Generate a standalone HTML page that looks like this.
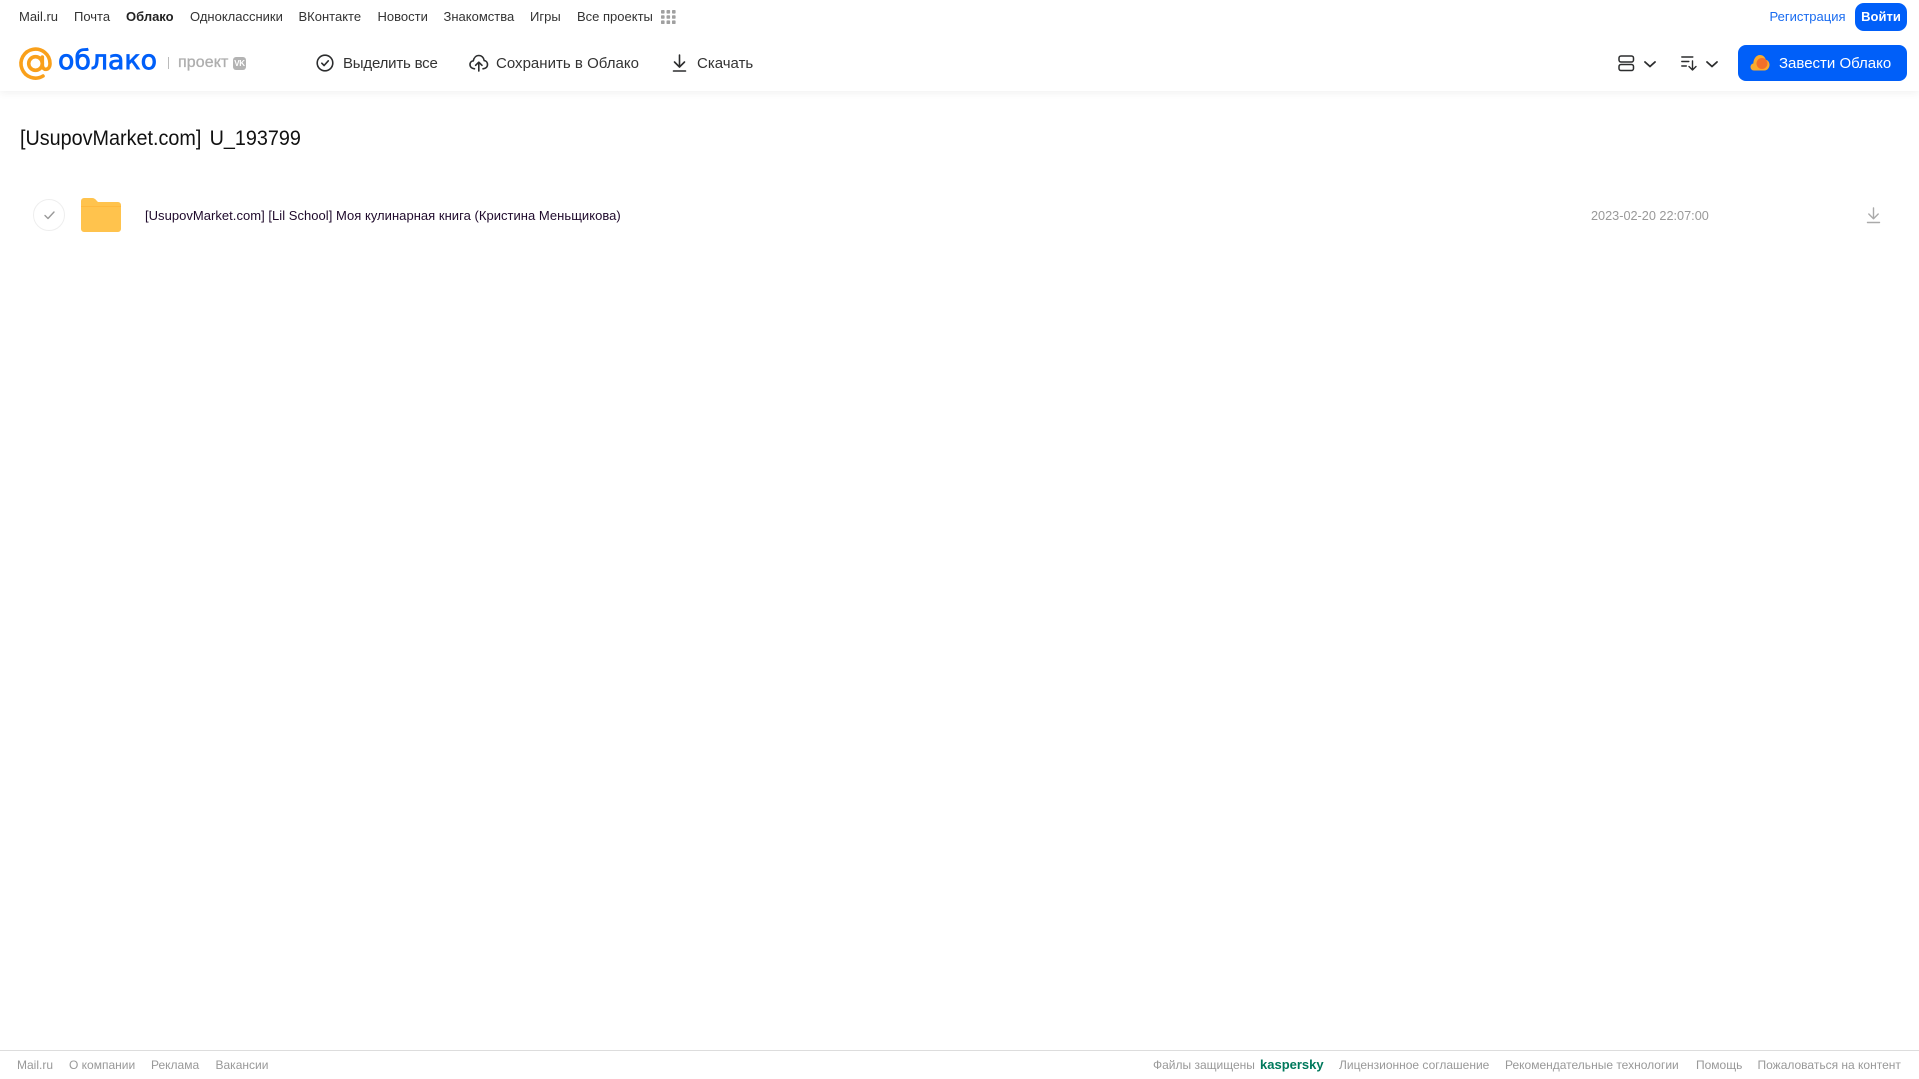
<!DOCTYPE html>
<html lang="ru"><head><meta charset="utf-8"><title>Облако</title>
<style>
html,body{margin:0;padding:0;background:#fff}
body{width:1919px;height:1079px;overflow:hidden;position:relative;font-family:"Liberation Sans",Arial,sans-serif}
.t{position:absolute;white-space:nowrap;line-height:20px;height:20px}
.n{top:7px;font-size:13px;color:#333}
.h{top:54px;font-size:15px;color:#333}
.f{top:1055px;font-size:12px;color:#999}
svg{position:absolute;overflow:visible}
</style></head><body>
<div style="position:absolute;left:0;top:0;width:1919px;height:91px;background:#fff;box-shadow:0 2px 8px rgba(0,0,0,.06)"></div>

<span class="t n" style="left:19px">Mail.ru</span>
<span class="t n" style="left:74px">Почта</span>
<span class="t n" style="left:126px;font-weight:bold;color:#222">Облако</span>
<span class="t n" style="left:190px">Одноклассники</span>
<span class="t n" style="left:298.500px">ВКонтакте</span>
<span class="t n" style="left:377.500px">Новости</span>
<span class="t n" style="left:443.500px">Знакомства</span>
<span class="t n" style="left:530px">Игры</span>
<span class="t n" style="left:577px">Все проекты</span>
<svg style="left:661px;top:10px" width="15" height="14" fill="#a0a0a0"><rect x="0" y="0" width="3.6" height="3.6" rx=".8"/><rect x="5.5" y="0" width="3.6" height="3.6" rx=".8"/><rect x="11" y="0" width="3.6" height="3.6" rx=".8"/><rect x="0" y="5.2" width="3.6" height="3.6" rx=".8"/><rect x="5.5" y="5.2" width="3.6" height="3.6" rx=".8"/><rect x="11" y="5.2" width="3.6" height="3.6" rx=".8"/><rect x="0" y="10.4" width="3.6" height="3.6" rx=".8"/><rect x="5.5" y="10.4" width="3.6" height="3.6" rx=".8"/><rect x="11" y="10.4" width="3.6" height="3.6" rx=".8"/></svg>

<span class="t n" style="left:1769.500px;color:#1a6cf0">Регистрация</span>
<div style="position:absolute;left:1855px;top:3px;width:52px;height:28px;border-radius:9px;background:#005ff9;color:#fff;font-size:13px;font-weight:bold;line-height:28px;text-align:center">Войти</div>

<!-- logo -->
<svg style="left:19px;top:47px" width="33" height="33" viewBox="0 0 33 33" fill="none" stroke="#f9a01b" stroke-width="3.600" stroke-linecap="round"><circle cx="16.5" cy="16.5" r="6.800"/><path d="M23.300 10v8c0 6 7.700 6 7.700-1.500A14.500 14.500 0 1 0 24 29"/></svg>
<svg style="left:58px;top:44px" width="100" height="36"><text x="0" y="25" font-family="DejaVu Sans,sans-serif" font-size="27" fill="#005ff9" stroke="#005ff9" stroke-width=".8" textLength="99" lengthAdjust="spacingAndGlyphs">облако</text></svg>
<div style="position:absolute;left:168px;top:57px;width:1px;height:12px;background:#bbb"></div>
<span class="t" style="left:178px;top:53px;font-size:16px;color:#aeaeae;letter-spacing:.1px;-webkit-text-stroke:.3px #aeaeae">проект</span>
<div style="position:absolute;left:233px;top:57px;width:13px;height:13px;border-radius:3px;background:#b3b3b3;color:#fff;font-size:8px;font-weight:bold;line-height:13px;text-align:center;letter-spacing:-.3px">VK</div>

<!-- toolbar -->
<svg style="left:316px;top:54px" width="18" height="18" fill="none" stroke="#2c2d2e" stroke-width="1.600" stroke-linecap="round" stroke-linejoin="round"><circle cx="9" cy="9" r="7.800"/><path d="M5.800 9.200l2.300 2.300 4.200-4.700"/></svg>
<span class="t h" style="left:343px;letter-spacing:-.2px">Выделить все</span>
<svg style="left:469px;top:54px" width="19" height="18" fill="none" stroke="#2c2d2e" stroke-width="1.600" stroke-linecap="round" stroke-linejoin="round"><path d="M5.500 14.800C3 14.500 1 13 1 10.500 1 8.400 2.500 7 4.300 6.800 5 3.500 7.200 1.500 9.800 1.500c2.900 0 5 2.200 5.400 5.100 2 .2 3.300 1.900 3.300 3.900 0 2.500-1.900 4-4.500 4.300"/><path d="M9.800 17V8.500M6.600 11.300l3.200-3.100 3.200 3.100"/></svg>
<span class="t h" style="left:496px;letter-spacing:.02px">Сохранить в Облако</span>
<svg style="left:672px;top:54px" width="15" height="18" fill="none" stroke="#2c2d2e" stroke-width="1.600" stroke-linecap="round" stroke-linejoin="round"><path d="M7.500 1v11.500M2.500 8l5 5 5-5M1.500 17h12"/></svg>
<span class="t h" style="left:697px">Скачать</span>

<svg style="left:1618px;top:55px" width="17" height="17" fill="none" stroke="#2c2d2e" stroke-width="1.500"><rect x="1" y="1" width="14.500" height="6" rx="2"/><rect x="1" y="9.500" width="14.500" height="6" rx="2"/></svg>
<svg style="left:1644px;top:61px" width="12" height="7" fill="none" stroke="#2c2d2e" stroke-width="1.800" stroke-linecap="round" stroke-linejoin="round"><path d="M1 1l5 4.500L11 1"/></svg>
<svg style="left:1681px;top:56px" width="17" height="15" fill="none" stroke="#2c2d2e" stroke-width="1.400" stroke-linecap="round" stroke-linejoin="round"><path d="M.8 1h11M.8 5.500h7M.8 10h4.500M11.500 5v8.500M8 10.500l3.500 3.500 3.500-3.500"/></svg>
<svg style="left:1706px;top:61px" width="12" height="7" fill="none" stroke="#2c2d2e" stroke-width="1.800" stroke-linecap="round" stroke-linejoin="round"><path d="M1 1l5 4.500L11 1"/></svg>

<div style="position:absolute;left:1738px;top:45px;width:169px;height:36px;border-radius:8px;background:#005ff9"></div>
<svg style="left:1750px;top:54px" width="20" height="17"><path d="M4 16.500C1.800 16.500 .5 14.800.5 13c0-1.800 1.200-3.200 2.800-3.500C3.500 5 6 1 10 1c3 0 5 2 5.800 4.800 2.200.5 3.700 2.500 3.700 5 0 3-2.200 5.700-5 5.700z" fill="#fbab2c"/><circle cx="12" cy="9.500" r="5.500" fill="#f2702a"/></svg>
<span class="t" style="left:1779px;top:54px;font-size:15px;color:#fff">Завести Облако</span>

<!-- content -->
<span class="t" style="left:20px;top:125.500px;height:24px;line-height:24px;font-size:21.500px;color:#111;word-spacing:3px;transform:scaleX(.92);transform-origin:left center">[UsupovMarket.com] U_193799</span>

<div style="position:absolute;left:33px;top:199px;width:30px;height:30px;border:1px solid #eee;border-radius:50%"></div>
<svg style="left:44px;top:211px" width="11" height="9" fill="none" stroke="#999" stroke-width="1.400" stroke-linecap="round" stroke-linejoin="round"><path d="M1 4.500l3 3L10 1"/></svg>
<svg style="left:81px;top:198px" width="40" height="34"><path d="M0 3a3 3 0 0 1 3-3h8c2 0 3.500 1 4.500 2.500L17 4h20a3 3 0 0 1 3 3v24a3 3 0 0 1-3 3H3a3 3 0 0 1-3-3z" fill="#ffc34d"/><rect x="0" y="8" width="40" height="1" fill="#ffb83d"/></svg>
<span class="t" style="left:145px;top:206px;font-size:13px;color:#1f0a2c;letter-spacing:.03px">[UsupovMarket.com] [Lil School] Моя кулинарная книга (Кристина Меньщикова)</span>
<span class="t" style="left:1591px;top:206px;font-size:12.700px;color:#999">2023-02-20 22:07:00</span>
<svg style="left:1867px;top:207px" width="13" height="17" fill="none" stroke="#aaa" stroke-width="1.400" stroke-linecap="round" stroke-linejoin="round"><path d="M6.500 1v10M1.800 7l4.700 4.700L11.200 7M.5 15.500h12"/></svg>

<!-- footer -->
<div style="position:absolute;left:0;top:1050px;width:1919px;height:1px;background:#ddd"></div>
<span class="t f" style="left:17px">Mail.ru</span>
<span class="t f" style="left:69px">О компании</span>
<span class="t f" style="left:151px">Реклама</span>
<span class="t f" style="left:215.500px">Вакансии</span>
<span class="t f" style="left:1153px">Файлы защищены</span>
<span class="t f" style="left:1260px;font-size:13px;font-weight:bold;color:#00795c">kaspersky</span>
<span class="t f" style="left:1339px">Лицензионное соглашение</span>
<span class="t f" style="left:1505px">Рекомендательные технологии</span>
<span class="t f" style="left:1696px">Помощь</span>
<span class="t f" style="left:1757.500px">Пожаловаться на контент</span>
</body></html>
